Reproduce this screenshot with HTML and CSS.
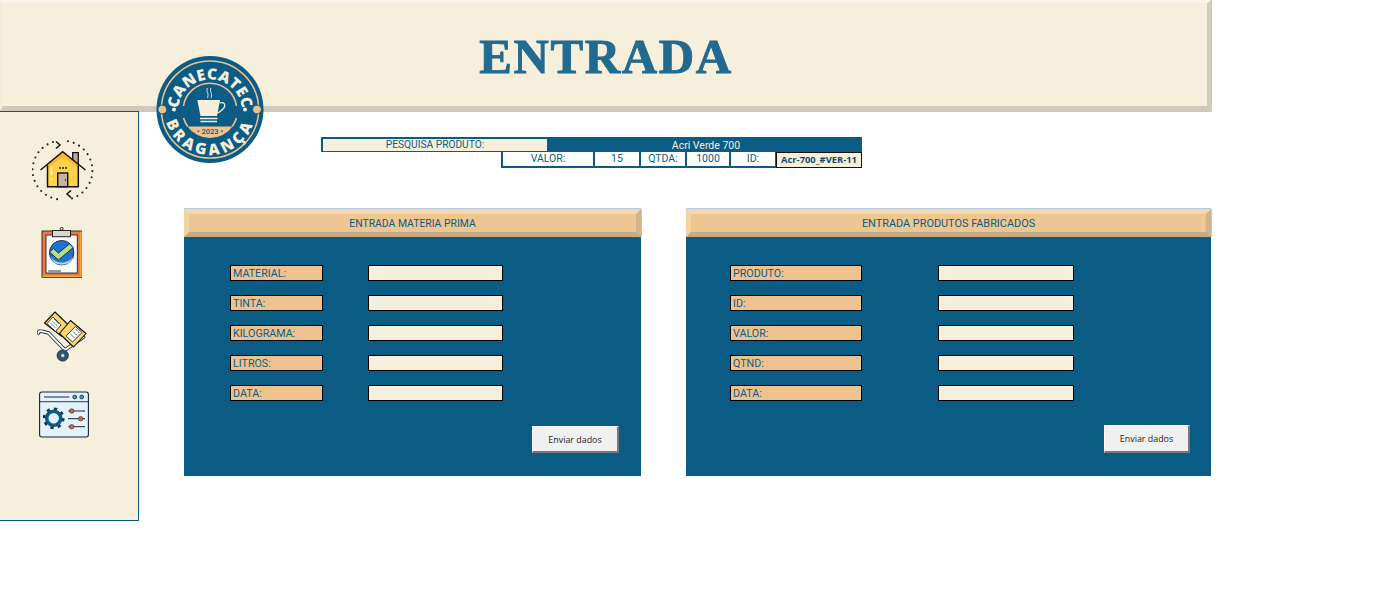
FILE: index.html
```html
<!DOCTYPE html>
<html lang="pt-BR">

<head>
  <meta charset="UTF-8" />
  <title>Entrada</title>
  <link rel="stylesheet" href="styles.css">
</head>

<body>
  <header class="topo">
    <h1>ENTRADA</h1>
  </header>

  <!-- Logo over the header edge -->
  <svg class="logo" viewBox="156 56 108 108" role="img" aria-label="Canecatec Bragança">
    <defs>
      <path id="arcoTopo" d="M178.2 115 A32 32 0 1 1 241.8 115" />
      <path id="arcoBase" d="M164.6 105 A45.6 45.6 0 1 0 255.4 105" />
    </defs>
    <circle cx="210" cy="109.5" r="53.5" fill="#0b5c85" />
    <circle cx="210" cy="109.5" r="48.6" fill="none" stroke="#edc28e" stroke-width="1.5" />
    <path d="M183.5 106 A26.8 26.8 0 0 1 236.5 106" fill="none" stroke="#edc28e" stroke-width="1.6" />
    <path d="M183.5 118 A28 28 0 0 0 187.8 126.5 M236.5 118 A28 28 0 0 1 232.2 126.5" fill="none" stroke="#edc28e" stroke-width="1.6" />
    <path d="M187.4 126.5 A28 28 0 0 0 232.6 126.5 Z" fill="#edc28e" />
    <circle cx="162.3" cy="109.5" r="4.4" fill="#edc28e" stroke="#0b5c85" stroke-width="1" />
    <circle cx="257" cy="109.5" r="4.4" fill="#edc28e" stroke="#0b5c85" stroke-width="1" />
    <circle cx="174" cy="109.5" r="2" fill="#f6efdc" />
    <circle cx="245" cy="109.5" r="2" fill="#f6efdc" />
    <text class="logo-nome"><textPath href="#arcoTopo" startOffset="50%" text-anchor="middle">CANECATEC</textPath></text>
    <text class="logo-nome logo-cidade"><textPath href="#arcoBase" startOffset="50%" text-anchor="middle">BRAGANÇA</textPath></text>
    <text class="logo-ano" x="210" y="133.5" text-anchor="middle">• 2023 •</text>
    <path d="M197.3 100 H220 L217 116 H200.5 Z" fill="#f6efdc" />
    <path d="M219.5 103 C226 101 226 107 222 110 C220 112 218 113 216 113.5" fill="none" stroke="#f6efdc" stroke-width="1.2" />
    <path d="M200 118.5 H217.5 M200.5 121.5 H217" stroke="#f6efdc" stroke-width="1.4" />
    <path d="M207.5 88 C205.5 91 209.5 93 207.5 98 M211 88 C209 91 213 93 211 98" fill="none" stroke="#f6efdc" stroke-width="0.9" />
  </svg>

  <div class="conteudo">
    <aside class="lateral">
      <!-- Home -->
      <svg class="icone icone-casa" viewBox="32 139 62 62">
        <path d="M53 142 A29.5 29.5 0 0 0 60 199.5 M72 198.4 A29.5 29.5 0 0 0 66 141" fill="none" stroke="#222" stroke-width="2.1" stroke-linecap="round" stroke-dasharray="0 6" />
        <path d="M56 141.5 L60 145 L56 148.5 M71 190.5 L67 194 L71 197.5" fill="none" stroke="#111" stroke-width="1.5" />
        <path d="M72.7 163 V152.7 H78.3 V168 Z" fill="#b9a79a" stroke="#111" stroke-width="1.3" />
        <path d="M47.5 186.5 V165 L62.7 152 L78.3 165 V186.5 Z" fill="#ffd24a" />
        <path d="M47.5 165 L62.7 152 L78.3 165 V168 L62.7 157 L47.5 168 Z" fill="#feb52c" />
        <path d="M40.5 170 L62.7 151.7 L85.5 170 M47.5 165.5 V186.7 H78.3 V165.5" fill="none" stroke="#111" stroke-width="1.5" />
        <rect x="57.7" y="173" width="10" height="13.7" fill="#c5b3a6" stroke="#111" stroke-width="1.4" />
        <path d="M59 168 H61 M62 168 H64 M65 168 H67" stroke="#222" stroke-width="1.6" />
        <path d="M51.5 167 V175 M51.5 177.5 V179.5" stroke="#fff6d8" stroke-width="1.5" />
        <circle cx="65.5" cy="180" r="0.7" fill="#111" />
      </svg>

      <!-- Clipboard -->
      <svg class="icone icone-lista" viewBox="41 227 42 51">
        <rect x="42" y="231" width="39.5" height="46.5" fill="#ec7a45" stroke="#222" stroke-width="0.9" />
        <path d="M42.5 276.5 H81 V231.5" fill="none" stroke="#f5ab3e" stroke-width="1.6" />
        <rect x="46" y="235" width="31.3" height="38" fill="#fbfcff" stroke="#222" stroke-width="0.9" />
        <circle cx="61.7" cy="228.8" r="1.5" fill="none" stroke="#222" stroke-width="0.9" />
        <rect x="52.5" y="230.5" width="18" height="6.2" fill="#d9d5d3" stroke="#222" stroke-width="1" />
        <circle cx="61.7" cy="252.7" r="12.2" fill="#1f74d0" stroke="#1b2c48" stroke-width="1" />
        <path d="M50.5 257 A12 12 0 0 0 73 257 A14 14 0 0 1 50.5 257 Z" fill="#a9d8f8" />
        <path d="M49.5 252 L53.5 248.5 L58.5 253 L69.5 243.8 L73.3 247.5 L58.5 260 Z" fill="#b2e08a" stroke="#1b2c48" stroke-width="1" stroke-linejoin="round" />
        <path d="M48.3 271 H61" stroke="#333" stroke-width="1" />
      </svg>

      <!-- Hand truck -->
      <svg class="icone icone-carga" viewBox="37 311 50 51">
        <path d="M38.5 333 C38 331 40 331 43 331.5 L48.5 333 L65 350 L83.5 337" fill="none" stroke="#1b2c48" stroke-width="3.6" stroke-linecap="round" stroke-linejoin="round" />
        <path d="M38.5 333 C38 331 40 331 43 331.5 L48.5 333 L65 350 L83.5 337" fill="none" stroke="#fff" stroke-width="1.8" stroke-linecap="round" stroke-linejoin="round" />
        <path d="M55 312 L70 326.5 L62 336.5 L44.5 323 Z" fill="#fdd36a" stroke="#111" stroke-width="1.1" stroke-linejoin="round" />
        <path d="M53 317 L61 325 L55.5 331.5 L47 323.5 Z" fill="#fff" stroke="#1b2c48" stroke-width="0.9" />
        <path d="M50.5 323 L55.5 328 M52.3 321 L57.3 326 M54 319 L59 324" stroke="#444" stroke-width="0.7" />
        <path d="M70.5 320.5 L86 333.5 L73.5 347 L59.5 333.5 Z" fill="#fdd36a" stroke="#111" stroke-width="1.1" stroke-linejoin="round" />
        <path d="M75.5 326.5 L82 332.5 L72.5 342 L66 336 Z" fill="#fff" stroke="#1b2c48" stroke-width="0.9" />
        <path d="M70.5 334 L74.5 338 M73 331.5 L77 335.5 M75.5 329 L79.5 333" stroke="#444" stroke-width="0.8" />
        <circle cx="62.7" cy="355.5" r="5.6" fill="#2c5877" stroke="#1b2c48" stroke-width="0.9" />
        <circle cx="62.7" cy="355.5" r="1.9" fill="#f6efdc" stroke="#1b2c48" stroke-width="0.5" />
      </svg>

      <!-- Settings window -->
      <svg class="icone icone-ajustes" viewBox="39 391 50 47">
        <rect x="39.6" y="392" width="48.8" height="45" rx="2.2" fill="#e4f2fd" stroke="#16263c" stroke-width="1.1" />
        <path d="M40 401.7 H88" stroke="#16263c" stroke-width="0.9" />
        <path d="M44 397 H69.3" stroke="#16263c" stroke-width="1" />
        <circle cx="74.7" cy="397" r="1.9" fill="#3aa0b8" stroke="#16263c" stroke-width="0.8" />
        <circle cx="81.7" cy="397" r="1.9" fill="#3aa0b8" stroke="#16263c" stroke-width="0.8" />
        <circle cx="53.7" cy="418.3" r="7" fill="none" stroke="#0b5c85" stroke-width="3.6" />
        <circle cx="53.7" cy="418.3" r="9.6" fill="none" stroke="#16384f" stroke-width="2.6" stroke-dasharray="3.2 4.34" />
        <path d="M68.3 411 H85 M68 418.7 H85 M68.3 426.7 H85" stroke="#16263c" stroke-width="1" />
        <circle cx="71.7" cy="411" r="2.3" fill="#d9602a" stroke="#16263c" stroke-width="0.5" />
        <circle cx="80.7" cy="418.7" r="2.3" fill="#d9602a" stroke="#16263c" stroke-width="0.5" />
        <circle cx="71.7" cy="426.7" r="2.3" fill="#d9602a" stroke="#16263c" stroke-width="0.5" />
      </svg>
    </aside>

    <main class="principal">
      <section class="pesquisa">
        <div class="pesquisa-linha">
          <div class="pesquisa-rotulo">PESQUISA PRODUTO:</div>
          <div class="pesquisa-valor">Acri Verde 700</div>
        </div>
        <div class="pesquisa-dados">
          <div class="dado dado-valor">VALOR:</div>
          <div class="dado dado-num">15</div>
          <div class="dado dado-num">QTDA:</div>
          <div class="dado dado-qtd">1000</div>
          <div class="dado dado-num">ID:</div>
          <div class="dado-id">Acr-700_#VER-11</div>
        </div>
      </section>

      <div class="paineis">
        <section class="painel painel-materia">
          <h2>ENTRADA MATERIA PRIMA</h2>
          <form class="painel-corpo">
            <div class="campos">
              <label class="rotulo">MATERIAL:</label><input class="caixa" type="text" />
              <label class="rotulo">TINTA:</label><input class="caixa" type="text" />
              <label class="rotulo">KILOGRAMA:</label><input class="caixa" type="text" />
              <label class="rotulo">LITROS:</label><input class="caixa" type="text" />
              <label class="rotulo">DATA:</label><input class="caixa" type="text" />
            </div>
            <button class="enviar" type="button">Enviar dados</button>
          </form>
        </section>

        <section class="painel painel-produtos">
          <h2>ENTRADA PRODUTOS FABRICADOS</h2>
          <form class="painel-corpo">
            <div class="campos">
              <label class="rotulo">PRODUTO:</label><input class="caixa" type="text" />
              <label class="rotulo">ID:</label><input class="caixa" type="text" />
              <label class="rotulo">VALOR:</label><input class="caixa" type="text" />
              <label class="rotulo">QTND:</label><input class="caixa" type="text" />
              <label class="rotulo">DATA:</label><input class="caixa" type="text" />
            </div>
            <button class="enviar" type="button">Enviar dados</button>
          </form>
        </section>
      </div>
    </main>
  </div>
</body>

</html>
```

FILE: styles.css
```css
* {
  margin: 0;
  padding: 0;
  box-sizing: border-box;
}

body {
  width: 1383px;
  height: 608px;
  overflow: hidden;
  background: #fff;
  font-family: "Roboto", "Liberation Sans", sans-serif;
  color: #0b5c85;
}

/* Bevelled header band */
.topo {
  width: 1211px;
  height: 111px;
  display: flex;
  justify-content: center;
  align-items: center;
  padding: 3px 0 0 2px;
  background: #f6efdc;
  border-style: solid;
  border-width: 3px 4px 5px 3px;
  border-color: #f9f4e7 #d2cdbd #cfcabb #f3ecd9;
  box-shadow: 1px 0 0 #b8c9e6, 0 1px 0 #b8c9e6;
}

.topo h1 {
  font-family: "Liberation Serif", serif;
  font-size: 49px;
  font-weight: 700;
  letter-spacing: 1.6px;
  color: #216a90;
  -webkit-text-stroke: 0.9px #216a90;
}

.logo {
  position: absolute;
  left: 156px;
  top: 56px;
  width: 108px;
  height: 108px;
}

.logo-nome {
  font-family: "Open Sans", sans-serif;
  font-size: 15.5px;
  font-weight: 800;
  letter-spacing: 0.3px;
  fill: #f6efdc;
}

.logo-cidade {
  letter-spacing: 3.5px;
}

.logo-ano {
  font-family: "Roboto", sans-serif;
  font-size: 7.5px;
  font-weight: 500;
  fill: #0b5c85;
}

.conteudo {
  display: flex;
}

.lateral {
  width: 139px;
  height: 410px;
  flex-shrink: 0;
  display: flex;
  flex-direction: column;
  align-items: center;
  padding: 27px 14px 0 0;
  background: #f6efdc;
  border: 1px solid #0b5c85;
  border-left: none;
}

.icone {
  display: block;
  flex-shrink: 0;
}

.icone-casa {
  width: 62px;
  height: 62px;
  margin-left: 2px;
}

.icone-lista {
  width: 42px;
  height: 51px;
  margin-top: 26px;
}

.icone-carga {
  width: 50px;
  height: 51px;
  margin-top: 33px;
}

.icone-ajustes {
  width: 50px;
  height: 47px;
  margin: 29px 0 0 4px;
}

.principal {
  padding: 26px 0 0 45px;
}

/* Search block */
.pesquisa {
  width: 541px;
  margin-left: 137px;
  font-size: 10.2px;
}

.pesquisa-linha {
  display: flex;
  height: 15px;
  background: #0b5c85;
  border: 2px solid #0b5c85;
  border-bottom-width: 1px;
}

.pesquisa-rotulo {
  width: 224px;
  background: #f6efdc;
  text-align: center;
  line-height: 12px;
}

.pesquisa-valor {
  flex: 1;
  padding-left: 5px;
  text-align: center;
  color: #f6efdc;
  line-height: 13px;
  font-size: 10.5px;
}

.pesquisa-dados {
  display: flex;
  gap: 2px;
  height: 16px;
  margin-left: 180px;
  background: #0b5c85;
  padding: 0 0 2px 2px;
}

.dado {
  background: #fff;
  text-align: center;
  line-height: 14px;
  font-size: 10.5px;
}

.dado-valor {
  width: 90px;
}

.dado-num {
  width: 44px;
}

.dado-qtd {
  width: 42px;
}

.dado-id {
  width: 86px;
  margin: 0 0 -2px -1px;
  background: #f6efdc;
  border: 1px solid #111;
  font-family: "Open Sans", sans-serif;
  font-size: 9.4px;
  font-weight: 700;
  line-height: 13px;
  text-align: center;
  white-space: nowrap;
  color: #12486a;
}

/* Panels */
.paineis {
  display: flex;
  gap: 45px;
  margin-top: 41px;
}

.painel {
  height: 267px;
  display: flex;
  flex-direction: column;
}

.painel-materia {
  width: 457px;
}

.painel-produtos {
  width: 525px;
}

.painel h2 {
  height: 28px;
  font-size: 10.4px;
  font-weight: 400;
  line-height: 20px;
  text-align: center;
  background: #edc692;
  border-style: solid;
  border-width: 5px;
  border-color: #f3d8ae #d0b48c #c6aa83 #f0d2a4;
  box-shadow: 0 -1px 0 #b8c9e6, 1px 0 0 #b8c9e6;
}

.painel-produtos h2 {
  font-size: 10.9px;
}

.painel-corpo {
  flex: 1;
  display: flex;
  flex-direction: column;
  background: #0b5c85;
  padding-top: 28px;
}

.campos {
  display: grid;
  row-gap: 14px;
}

.painel-materia .campos {
  grid-template-columns: 93px 135px;
  column-gap: 45px;
  margin-left: 46px;
}

.painel-produtos .campos {
  grid-template-columns: 132px 136px;
  column-gap: 76px;
  margin-left: 44px;
}

.rotulo {
  height: 16px;
  padding: 1px 0 0 2px;
  background: #edc28e;
  border: 1px solid #000;
  font-size: 10.7px;
  line-height: 13px;
  color: #0b5c85;
}

.caixa {
  height: 16px;
  background: #f6efdc;
  border: 1px solid #000;
  border-radius: 0;
}

.enviar {
  align-self: flex-end;
  width: 87px;
  height: 27px;
  margin: 25px 22px 0 0;
  background: #f0f0f0;
  border-style: solid;
  border-width: 1px 2px 2px 1px;
  border-color: #fbfbfb #777 #777 #fbfbfb;
  font-family: "Open Sans", sans-serif;
  font-size: 8.9px;
  color: #222;
}

.painel-produtos .enviar {
  width: 86px;
  height: 28px;
  margin: 24px 21px 0 0;
}
```
